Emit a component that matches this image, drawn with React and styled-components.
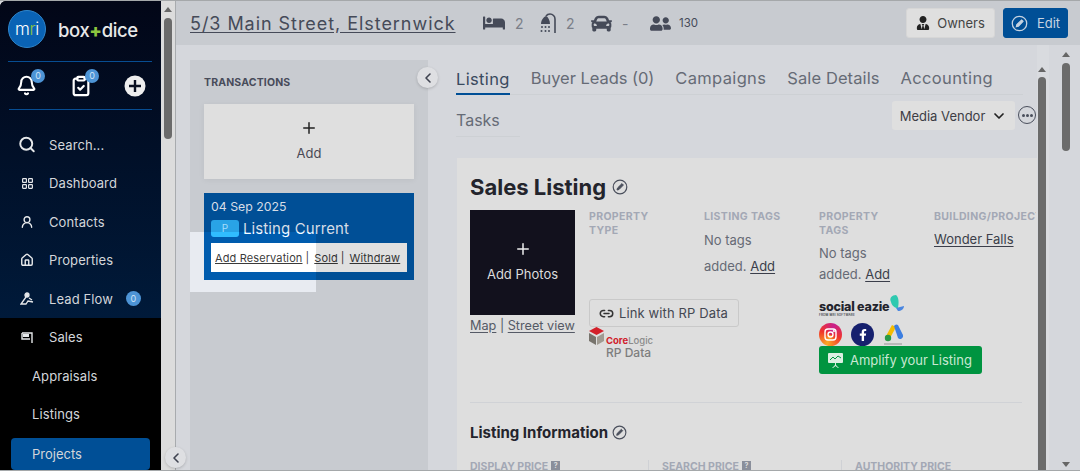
import React from "react";
import styled, { createGlobalStyle } from "styled-components";
import { Bell, ClipboardCheck, Search, LayoutGrid, UserRound, House, ChevronLeft, ChevronDown, Link2, Plus } from "lucide-react";
import { FaBed, FaCar, FaUserFriends, FaUserTie, FaFacebookF } from "react-icons/fa";

const GlobalStyle = createGlobalStyle`
  html, body { margin: 0; padding: 0; height: 100%; overflow: hidden; }
  * { box-sizing: border-box; }
  body { font-family: "Inter", "Open Sans", sans-serif; background: #d5d7dc; color: #3f4350; }
`;

const Page = styled.div`
  display: flex;
  width: 1080px;
  height: 471px;
  overflow: hidden;
  border-top: 1px solid #a5a8aa;
  border-bottom: 1px solid #a5a8aa;
`;

const Sidebar = styled.aside`
  width: 161px;
  flex: none;
  display: flex;
  flex-direction: column;
  background: #000;
  border-top-left-radius: 6px;
  overflow: hidden;
`;

const SideTop = styled.div`
  height: 317px;
  flex: none;
  padding: 0 9px;
  background: linear-gradient(#020617, #001a3a);
`;

const LogoRow = styled.div`
  height: 61px;
  display: flex;
  align-items: center;
  gap: 12px;
  margin: 0 0 0 -1px;
  border-bottom: 1px solid #074d92;
`;

const LogoMark = styled.div`
  width: 38px;
  height: 38px;
  margin-top: -4px;
  border-radius: 50%;
  background: #0a63b5;
  border: 1px solid #2f86cc;
  display: flex;
  align-items: center;
  justify-content: center;
  font-size: 17px;
  font-weight: 300;
  color: #fff;
  letter-spacing: -0.3px;
`;

const Green = styled.span`
  color: #8dc63f;
`;

const Wordmark = styled.div`
  margin-top: -3px;
  font-size: 18.5px;
  font-weight: 500;
  color: #e8e8e8;
  letter-spacing: -0.4px;
`;

const PlusSign = styled.span`
  color: #8dc63f;
  font-weight: 800;
`;

const QuickRow = styled.div`
  height: 48px;
  display: flex;
  align-items: center;
  justify-content: space-between;
  padding: 0 6px 0 7px;
  border-bottom: 1px solid #074d92;
`;

const QuickIcon = styled.div`
  position: relative;
  width: 22px;
  height: 22px;
  color: #fff;
  display: flex;
`;

const TopBadge = styled.span`
  position: absolute;
  top: -6px;
  right: -7px;
  width: 14px;
  height: 14px;
  border-radius: 50%;
  background: #4d94d6;
  color: #cfe3f5;
  font-size: 9px;
  line-height: 14px;
  text-align: center;
`;

const Nav = styled.nav`
  padding-top: 15.5px;
`;

const NavRow = styled.div`
  height: 38.5px;
  display: flex;
  align-items: center;
  padding-left: ${({ $sub }) => ($sub ? "23px" : "9px")};
  font-size: 13px;
  color: #d3d6da;
  letter-spacing: 0.1px;
`;

const NavIcon = styled.span`
  width: 18px;
  margin-right: 13px;
  flex: none;
  display: flex;
  justify-content: center;
  color: #e6e8ea;
`;

const NavBadge = styled.span`
  width: 15px;
  height: 15px;
  margin-left: 13px;
  border-radius: 50%;
  background: #4d94d6;
  color: #cfe3f5;
  font-size: 9px;
  line-height: 15px;
  text-align: center;
`;

const SalesGroup = styled.div`
  padding-left: 9px;
`;

const ActiveRow = styled.div`
  height: 32px;
  margin: 4px 11px 0 2px;
  padding-left: 21px;
  display: flex;
  align-items: center;
  border-radius: 4px;
  background: #004f96;
  color: #d3d6da;
  font-size: 13px;
`;

const SideScroll = styled.div`
  width: 15px;
  flex: none;
  position: relative;
  background: #dcdcdc;
  border-right: 1px solid #a8abae;
`;

const Thumb = styled.div`
  position: absolute;
  top: ${({ $top }) => $top}px;
  left: ${({ $left }) => $left}px;
  width: 8px;
  height: ${({ $h }) => $h}px;
  border-radius: 4px;
  background: #6b6b6b;
`;

const Arrow = styled.div`
  position: absolute;
  left: ${({ $left }) => $left}px;
  top: ${({ $top }) => $top}px;
  width: 0;
  height: 0;
  border-left: 4px solid transparent;
  border-right: 4px solid transparent;
  border-${({ $down }) => ($down ? "top" : "bottom")}: 5px solid #666;
`;

const Main = styled.div`
  flex: 1;
  min-width: 0;
  display: flex;
  flex-direction: column;
`;

const Header = styled.header`
  height: 44px;
  flex: none;
  display: flex;
  align-items: center;
  padding: 0 12px 0 14px;
  background: #c8cbd0;
`;

const Address = styled.a`
  width: 293px;
  flex: none;
  font-size: 18px;
  color: #454a58;
  text-decoration: underline;
  text-underline-offset: 2px;
  letter-spacing: 0.95px;
`;

const Stat = styled.div`
  width: ${({ $w }) => $w}px;
  flex: none;
  display: flex;
  align-items: center;
  gap: ${({ $gap }) => $gap || 10}px;
  color: #7a7e88;
  font-size: 14px;
`;

const StatIcon = styled.span`
  display: flex;
  color: #454a58;
`;

const SmallCount = styled.span`
  font-size: 11.5px;
  color: #454a58;
`;

const HeaderActions = styled.div`
  margin-left: auto;
  display: flex;
  gap: 8px;
`;

const HeaderButton = styled.button`
  height: 30px;
  width: ${({ $primary }) => ($primary ? "65px" : "89px")};
  display: flex;
  align-items: center;
  justify-content: center;
  gap: ${({ $primary }) => ($primary ? "9px" : "7px")};
  border-radius: 3px;
  border: 1px solid ${({ $primary }) => ($primary ? "#004f96" : "#d6d6d6")};
  background: ${({ $primary }) => ($primary ? "#004f96" : "#dfdfdf")};
  color: ${({ $primary }) => ($primary ? "#c7d4e2" : "#444")};
  font: 13px "Inter", sans-serif;
`;

const Body = styled.div`
  flex: 1;
  min-height: 0;
  display: flex;
  padding-left: 14px;
`;

const TxPanel = styled.section`
  position: relative;
  width: 238px;
  flex: none;
  padding: 0 14px;
  background: #c8cbd0;
  margin-top: 15px;
`;

const TxTitle = styled.h3`
  margin: 0;
  height: 44px;
  line-height: 46px;
  font-size: 10.5px;
  font-weight: 700;
  letter-spacing: 0.15px;
  color: #484c5a;
`;

const AddCard = styled.div`
  height: 75px;
  display: flex;
  flex-direction: column;
  align-items: center;
  padding-top: 15px;
  background: #dfdfdf;
  box-shadow: 0 1px 6px rgba(0, 0, 0, 0.06);
  font-size: 13px;
  color: #4a4a55;
  gap: 8px;
`;

const TxCard = styled.div`
  margin-top: 14px;
  height: 87px;
  padding: 6px 7px 5px;
  background: #004f96;
  color: #d6dde6;
`;

const TxDate = styled.div`
  font-size: 12.3px;
  line-height: 16px;
`;

const TxStatus = styled.div`
  display: flex;
  align-items: center;
  gap: 4px;
  margin-top: 4px;
  height: 18px;
  font-size: 15px;
  letter-spacing: 0.1px;
`;

const TypeBadge = styled.span`
  width: 28px;
  height: 17px;
  border-radius: 3px;
  background: #29a3e6;
  color: #a6ddfa;
  font-size: 10px;
  line-height: 17px;
  text-align: center;
`;

const ActionBar = styled.div`
  margin-top: 6px;
  height: 29px;
  display: flex;
  align-items: center;
  padding-left: 4px;
  background: #e0e0e0;
  font-size: 11px;
  letter-spacing: 0.12px;
  color: #333;
  white-space: nowrap;
`;

const ActionLink = styled.a`
  text-decoration: underline;
  text-underline-offset: 1px;
  margin: 0 3px 0 0;
`;

const Sep = styled.span`
  margin-right: 5px;
`;

const Spotlight = styled.div`
  position: absolute;
  left: 0;
  top: 172px;
  width: 126px;
  height: 60px;
  backdrop-filter: brightness(1.16);
`;

const RoundToggle = styled.button`
  position: absolute;
  width: 21px;
  height: 21px;
  left: ${({ $left }) => $left}px;
  top: ${({ $top }) => $top}px;
  padding: 0;
  border: none;
  border-radius: 50%;
  background: #dedfe2;
  color: #3f4350;
  display: flex;
  align-items: center;
  justify-content: center;
  box-shadow: 0 1px 3px rgba(0, 0, 0, 0.18);
`;

const Center = styled.div`
  width: 581px;
  flex: none;
  margin-left: 28px;
  display: flex;
  flex-direction: column;
  min-height: 0;
  overflow: hidden;
`;

const TabRow = styled.div`
  display: flex;
  align-items: flex-end;
  height: 50px;
  width: 567px;
  gap: 21px;
  border-bottom: 1px solid #cdd0d4;
`;

const Tab = styled.div`
  height: 30px;
  padding-top: 3px;
  font-size: 16.5px;
  line-height: 22px;
  letter-spacing: ${({ $ls }) => $ls ?? 0.35}px;
  color: ${({ $active }) => ($active ? "#3a4a5e" : "#666b76")};
  ${({ $active }) => $active && "border-bottom: 2px solid #004f96; margin-bottom: -1px;"}
`;

const SubTabs = styled.div`
  height: 63px;
  display: flex;
  align-items: flex-start;
`;

const TasksTab = styled.div`
  width: 64px;
  height: 42px;
  padding-top: 14px;
  font-size: 16px;
  line-height: 22px;
  color: #666b76;
  border-bottom: 1px solid #cdd0d4;
`;

const VendorSelect = styled.div`
  margin: 6px 0 0 372px;
  width: 123px;
  height: 29px;
  display: flex;
  align-items: center;
  justify-content: center;
  gap: 6px;
  border-radius: 3px;
  background: #dfdfdf;
  font-size: 13px;
  color: #3d3d45;
`;

const MoreDots = styled.div`
  margin: 11px 0 0 3px;
  width: 18px;
  height: 18px;
  border-radius: 50%;
  border: 1.6px solid #4a4f5c;
  color: #4a4f5c;
  display: flex;
  align-items: center;
  justify-content: center;
  gap: 1px;
`;

const Dot = styled.i`
  width: 3px;
  height: 3px;
  border-radius: 50%;
  background: currentColor;
`;

const Sheet = styled.div`
  flex: 1;
  margin-left: 1px;
  padding: 0 13px;
  background: #dedede;
  min-height: 0;
  overflow: hidden;
`;

const SheetTitle = styled.h1`
  margin: 0;
  height: 52px;
  display: flex;
  align-items: center;
  gap: 6px;
  padding-top: 5px;
  font-size: 22px;
  font-weight: 700;
  color: #23242c;
`;

const SheetTop = styled.div`
  display: grid;
  grid-template-columns: 119px 115px 115px 115px 102px;
  height: 192px;
`;

const PhotoBox = styled.div`
  width: 105px;
  height: 105px;
  background: #12111d;
  color: #dcdcdc;
  font-size: 13px;
  display: flex;
  flex-direction: column;
  align-items: center;
  padding-top: 30px;
  gap: 8px;
`;

const PhotoLinks = styled.div`
  margin-top: 3px;
  font-size: 12.7px;
  line-height: 15px;
  white-space: nowrap;
  color: #555a66;
`;

const TextLink = styled.a`
  text-decoration: underline;
  text-underline-offset: 2px;
  color: ${({ $dark }) => ($dark ? "#3b3e4a" : "inherit")};
`;

const Field = styled.div`
  position: relative;
  white-space: ${({ $clip }) => ($clip ? "nowrap" : "normal")};
  overflow: ${({ $clip }) => ($clip ? "hidden" : "visible")};
  font-size: 13px;
  color: #666a75;
`;

const FieldLabel = styled.div`
  font-size: 10.5px;
  font-weight: 700;
  line-height: 14px;
  width: ${({ $w }) => $w || "80px"};
  color: #a3a8b5;
  letter-spacing: 0.35px;
`;

const TagText = styled.div`
  width: 90px;
  margin-top: ${({ $mt }) => $mt}px;
  line-height: ${({ $lh }) => $lh || 21}px;
`;

const RpButton = styled.button`
  display: flex;
  align-items: center;
  gap: 5px;
  width: 150px;
  height: 28px;
  margin-top: 61px;
  padding: 0 9px;
  border: 1px solid #c9c9c9;
  border-radius: 3px;
  background: #dedede;
  color: #444852;
  white-space: nowrap;
  letter-spacing: 0.12px;
  font: 13px "Inter", sans-serif;
`;

const RpLogo = styled.div`
  display: flex;
  gap: 2px;
`;

const RpText = styled.div`
  padding-top: 9px;
  font-size: 9.5px;
  font-weight: 700;
  line-height: 10px;
  color: #d0202a;
`;

const RpName = styled.div`
  font-size: 12px;
  font-weight: 500;
  line-height: 13px;
  color: #7d7d7d;
`;

const LogicWord = styled.span`
  color: #8b8b8b;
  font-weight: 500;
`;

const SocialBlock = styled.div`
  margin-top: 12px;
  display: flex;
  flex-direction: column;
`;

const EazieRow = styled.div`
  display: flex;
  align-items: flex-start;
  height: 26px;
  color: #23242c;
`;

const EazieWord = styled.div`
  padding-top: 4px;
  font-size: 12.5px;
  font-weight: 800;
  line-height: 12px;
  letter-spacing: -0.2px;
  white-space: nowrap;
`;

const EazieSub = styled.div`
  font-size: 3px;
  font-weight: 500;
  line-height: 4px;
  letter-spacing: 0.2px;
`;

const ButterflySlot = styled.span`
  display: flex;
  margin-top: -2px;
`;

const SocialIcons = styled.div`
  display: flex;
  align-items: center;
  gap: 9px;
  height: 23px;
`;

const SocialCircle = styled.span`
  width: 23px;
  height: 23px;
  border-radius: 50%;
  display: flex;
  align-items: center;
  justify-content: center;
  background: ${({ $bg }) => $bg};
  color: #fff;
`;

const AmplifyButton = styled.button`
  width: 163px;
  height: 28px;
  display: flex;
  align-items: center;
  gap: 7px;
  padding: 0 9px;
  border: none;
  border-radius: 3px;
  background: #009440;
  color: #c9e8d3;
  white-space: nowrap;
  font: 13px "Inter", sans-serif;
`;

const Divider = styled.hr`
  margin: 0;
  border: none;
  border-top: 1px solid #d0d2d6;
  width: 552px;
`;

const SectionTitle = styled.h2`
  margin: 0;
  height: 40px;
  padding-top: 18px;
  display: flex;
  align-items: center;
  gap: 4px;
  font-size: 15px;
  font-weight: 700;
  color: #23242c;
`;

const PriceRow = styled.div`
  display: grid;
  grid-template-columns: 178px 193px 193px;
  margin-top: 17px;
  height: 30px;
`;

const PriceCell = styled.div`
  display: flex;
  gap: 3px;
  padding-left: ${({ $first }) => ($first ? "0" : "13px")};
  border-left: ${({ $first }) => ($first ? "none" : "1px solid #cfd1d5")};
  font-size: 10.5px;
  font-weight: 700;
  color: #a3a8b5;
`;

const HelpMark = styled.span`
  width: 9px;
  height: 9px;
  margin-top: 1px;
  background: #8a8f9b;
  color: #dedede;
  font-size: 7px;
  line-height: 9px;
  text-align: center;
`;

const ScrollTrack = styled.div`
  position: relative;
  flex: none;
  width: ${({ $w }) => $w}px;
  margin-left: ${({ $ml }) => $ml || 0}px;
  background: ${({ $bg }) => $bg || "transparent"};
`;

const EditMark = ({ size = 16, color = "currentColor" }) => (
  <svg width={size} height={size} viewBox="0 0 16 16" fill="none" stroke={color}>
    <circle cx="8" cy="8" r="6.8" strokeWidth="1.2" />
    <path d="M5 11l.5-2L10 4.6l1.4 1.4L7 10.5z" strokeWidth="1" fill={color} />
  </svg>
);

const ShowerIcon = () => (
  <svg width="17" height="22" viewBox="0 0 17 22" fill="#454a58">
    <path d="M15 21V7a5 5 0 0 0-5-5 5 5 0 0 0-4 2" fill="none" stroke="#454a58" strokeWidth="1.6" />
    <path d="M1 12c0-4 2.500-7 5-8 2 1 4 4 4 8z" />
    <circle cx="2" cy="15" r="1" /><circle cx="5.500" cy="15" r="1" /><circle cx="9" cy="15" r="1" />
    <circle cx="1.500" cy="19" r="1" /><circle cx="5.500" cy="19" r="1" /><circle cx="9" cy="19" r="1" />
  </svg>
);

const LeadIcon = () => (
  <svg width="14" height="14" viewBox="0 0 14 14" fill="none" stroke="#e6e8ea" strokeWidth="1.3">
    <circle cx="7" cy="3" r="2" fill="#e6e8ea" />
    <path d="M6 5L1 12h5l2-3 5 1M9 6l3 2" />
  </svg>
);

const SalesIcon = () => (
  <svg width="13" height="13" viewBox="0 0 13 13" fill="none" stroke="#e6e8ea" strokeWidth="1.4">
    <path d="M1 2h10v10M1 2v6h8" />
    <rect x="2" y="3" width="6" height="3" fill="#e6e8ea" stroke="none" />
  </svg>
);

const CubeLogo = () => (
  <svg width="15" height="18" viewBox="0 0 15 18">
    <path d="M7.500 0L15 4 7.500 8 0 4z" fill="#d3202a" />
    <path d="M0 6l7 4v8l-7-4z" fill="#77736c" />
    <path d="M15 6l-7 4v8l7-4z" fill="#a09b92" />
  </svg>
);

const InstagramIcon = () => (
  <svg width="13" height="13" viewBox="0 0 13 13" fill="none" stroke="#fff" strokeWidth="1.4">
    <rect x="1" y="1" width="11" height="11" rx="3" />
    <circle cx="6.500" cy="6.500" r="2.500" />
    <circle cx="9.800" cy="3.200" r="0.4" />
  </svg>
);

const AdsIcon = () => (
  <svg width="23" height="24" viewBox="0 0 23 24">
    <path d="M9 2l-7 13 4 2 7-13z" fill="#f5bc00" />
    <path d="M11 3a3 3 0 0 1 4-1l5 10a3 3 0 0 1-5 3z" fill="#3c7ee0" />
    <circle cx="5" cy="15" r="3.200" fill="#2a9a47" />
    <rect x="1" y="20" width="18" height="2" fill="#aaa" opacity="0.7" />
  </svg>
);

const ButterflyIcon = () => (
  <svg width="16" height="18" viewBox="0 0 16 18">
    <path d="M2 7c-2-4 1-7 5-7 3 2 3 8 2 13-3 0-6-2-7-6z" fill="#2fc9b0" />
    <path d="M7 13l8-2c0 3-3 5-6 5z" fill="#4a86e0" />
  </svg>
);

const ChartBoard = () => (
  <svg width="15" height="16" viewBox="0 0 15 16" fill="#dcefe2">
    <rect x="0" y="1" width="15" height="10" rx="1" />
    <path d="M2 8l3-3 2 2 3-3 3 2" fill="none" stroke="#009440" strokeWidth="1" />
    <path d="M7 11h1v2l3 3H10l-2.500-2L5 16H4l3-3z" />
  </svg>
);

const navTop = [
  { label: "Dashboard", icon: <LayoutGrid size={13} strokeWidth={2.2} /> },
  { label: "Contacts", icon: <UserRound size={14} strokeWidth={2.4} /> },
  { label: "Properties", icon: <House size={14} strokeWidth={2.4} /> },
];

export default function App() {
  return (
    <Page>
      <GlobalStyle />
      <Sidebar>
        <SideTop>
          <LogoRow>
            <LogoMark>m<Green>r</Green>i</LogoMark>
            <Wordmark>box<PlusSign>+</PlusSign>dice</Wordmark>
          </LogoRow>
          <QuickRow>
            <QuickIcon><Bell size={21} strokeWidth={2.4} /><TopBadge>0</TopBadge></QuickIcon>
            <QuickIcon><ClipboardCheck size={22} strokeWidth={2.4} /><TopBadge>0</TopBadge></QuickIcon>
            <QuickIcon>
              <svg width="22" height="22" viewBox="0 0 22 22">
                <circle cx="11" cy="11" r="10.500" fill="#eee" />
                <path d="M11 5v12M5 11h12" stroke="#0a1020" strokeWidth="2.400" />
              </svg>
            </QuickIcon>
          </QuickRow>
          <Nav>
            <NavRow><NavIcon><Search size={19} strokeWidth={2.6} /></NavIcon>Search...</NavRow>
            {navTop.map((item) => (
              <NavRow key={item.label}><NavIcon>{item.icon}</NavIcon>{item.label}</NavRow>
            ))}
            <NavRow><NavIcon><LeadIcon /></NavIcon>Lead Flow<NavBadge>0</NavBadge></NavRow>
          </Nav>
        </SideTop>
        <SalesGroup>
          <NavRow><NavIcon><SalesIcon /></NavIcon>Sales</NavRow>
          <NavRow $sub>Appraisals</NavRow>
          <NavRow $sub>Listings</NavRow>
          <ActiveRow>Projects</ActiveRow>
        </SalesGroup>
      </Sidebar>

      <SideScroll>
        <Arrow $left={3} $top={6} />
        <Thumb $left={3} $top={17} $h={121} />
      </SideScroll>

      <Main>
        <Header>
          <Address>5/3 Main Street, Elsternwick</Address>
          <Stat $w={57}><StatIcon><FaBed size={22} /></StatIcon>2</Stat>
          <Stat $w={51} $gap={9}><StatIcon><ShowerIcon /></StatIcon>2</Stat>
          <Stat $w={59}><StatIcon><FaCar size={21} /></StatIcon>-</Stat>
          <Stat $w={60} $gap={8}><StatIcon><FaUserFriends size={21} /></StatIcon><SmallCount>130</SmallCount></Stat>
          <HeaderActions>
            <HeaderButton><FaUserTie size={14} color="#222" />Owners</HeaderButton>
            <HeaderButton $primary><EditMark size={17} />Edit</HeaderButton>
          </HeaderActions>
        </Header>
        <Body>
          <TxPanel>
            <TxTitle>TRANSACTIONS</TxTitle>
            <AddCard>
              <Plus size={18} color="#222" strokeWidth={2} />
              Add
            </AddCard>
            <TxCard>
              <TxDate>04 Sep 2025</TxDate>
              <TxStatus><TypeBadge>P</TypeBadge>Listing Current</TxStatus>
              <ActionBar>
                <ActionLink>Add Reservation</ActionLink><Sep>|</Sep>
                <ActionLink>Sold</ActionLink><Sep>|</Sep>
                <ActionLink>Withdraw</ActionLink>
              </ActionBar>
            </TxCard>
            <Spotlight />
            <RoundToggle $left={227} $top={7}><ChevronLeft size={16} strokeWidth={2.4} /></RoundToggle>
          </TxPanel>
          <Center>
            <TabRow>
              <Tab $active>Listing</Tab>
              <Tab $ls={-0.05}>Buyer Leads (0)</Tab>
              <Tab>Campaigns</Tab>
              <Tab $ls={0.1}>Sale Details</Tab>
              <Tab>Accounting</Tab>
            </TabRow>
            <SubTabs>
              <TasksTab>Tasks</TasksTab>
              <VendorSelect>Media Vendor<ChevronDown size={16} strokeWidth={2.6} color="#222" /></VendorSelect>
              <MoreDots><Dot /><Dot /><Dot /></MoreDots>
            </SubTabs>
            <Sheet>
              <SheetTitle>Sales Listing<EditMark size={16} color="#4a4f5c" /></SheetTitle>
              <SheetTop>
                <div>
                  <PhotoBox><Plus size={18} strokeWidth={2} color="#eee" />Add Photos</PhotoBox>
                  <PhotoLinks><TextLink>Map</TextLink> | <TextLink>Street view</TextLink></PhotoLinks>
                </div>
                <Field>
                  <FieldLabel>PROPERTY TYPE</FieldLabel>
                  <RpButton><Link2 size={15} color="#333" strokeWidth={2.4} />Link with RP Data</RpButton>
                  <RpLogo>
                    <CubeLogo />
                    <div>
                      <RpText>Core<LogicWord>Logic</LogicWord></RpText>
                      <RpName>RP Data</RpName>
                    </div>
                  </RpLogo>
                </Field>
                <Field>
                  <FieldLabel>LISTING TAGS</FieldLabel>
                  <TagText $mt={3} $lh={26}>No tags added. <TextLink $dark>Add</TextLink></TagText>
                </Field>
                <Field>
                  <FieldLabel>PROPERTY TAGS</FieldLabel>
                  <TagText $mt={5}>No tags added. <TextLink $dark>Add</TextLink></TagText>
                  <SocialBlock>
                    <EazieRow>
                      <div>
                        <EazieWord>social eazie</EazieWord>
                        <EazieSub>FROM MRI SOFTWARE</EazieSub>
                      </div>
                      <ButterflySlot><ButterflyIcon /></ButterflySlot>
                    </EazieRow>
                    <SocialIcons>
                      <SocialCircle $bg="conic-gradient(from 200deg, #f9a825, #f0352b, #c81f8c, #f0352b, #f9a825)"><InstagramIcon /></SocialCircle>
                      <SocialCircle $bg="#16206e"><FaFacebookF size={12} /></SocialCircle>
                      <AdsIcon />
                    </SocialIcons>
                    <AmplifyButton><ChartBoard />Amplify your Listing</AmplifyButton>
                  </SocialBlock>
                </Field>
                <Field $clip>
                  <FieldLabel $w="auto">BUILDING/PROJECT</FieldLabel>
                  <TagText $mt={5}><TextLink $dark>Wonder Falls</TextLink></TagText>
                </Field>
              </SheetTop>
              <Divider />
              <SectionTitle>Listing Information<EditMark size={15} color="#4a4f5c" /></SectionTitle>
              <PriceRow>
                <PriceCell $first>DISPLAY PRICE<HelpMark>?</HelpMark></PriceCell>
                <PriceCell>SEARCH PRICE<HelpMark>?</HelpMark></PriceCell>
                <PriceCell>AUTHORITY PRICE</PriceCell>
              </PriceRow>
            </Sheet>
          </Center>
          <ScrollTrack $w={12} $bg="#d9dbdf">
            <Arrow $left={1} $top={22} />
            <Thumb $left={1} $top={32} $h={400} />
          </ScrollTrack>
          <ScrollTrack $w={17} $ml={8}>
            <Arrow $left={5} $top={7} />
            <Thumb $left={5} $top={18} $h={88} />
            <Arrow $left={5} $top={417} $down />
          </ScrollTrack>
        </Body>
      </Main>
      <RoundToggle $left={165} $top={447}><ChevronLeft size={16} strokeWidth={2.4} /></RoundToggle>
    </Page>
  );
}
